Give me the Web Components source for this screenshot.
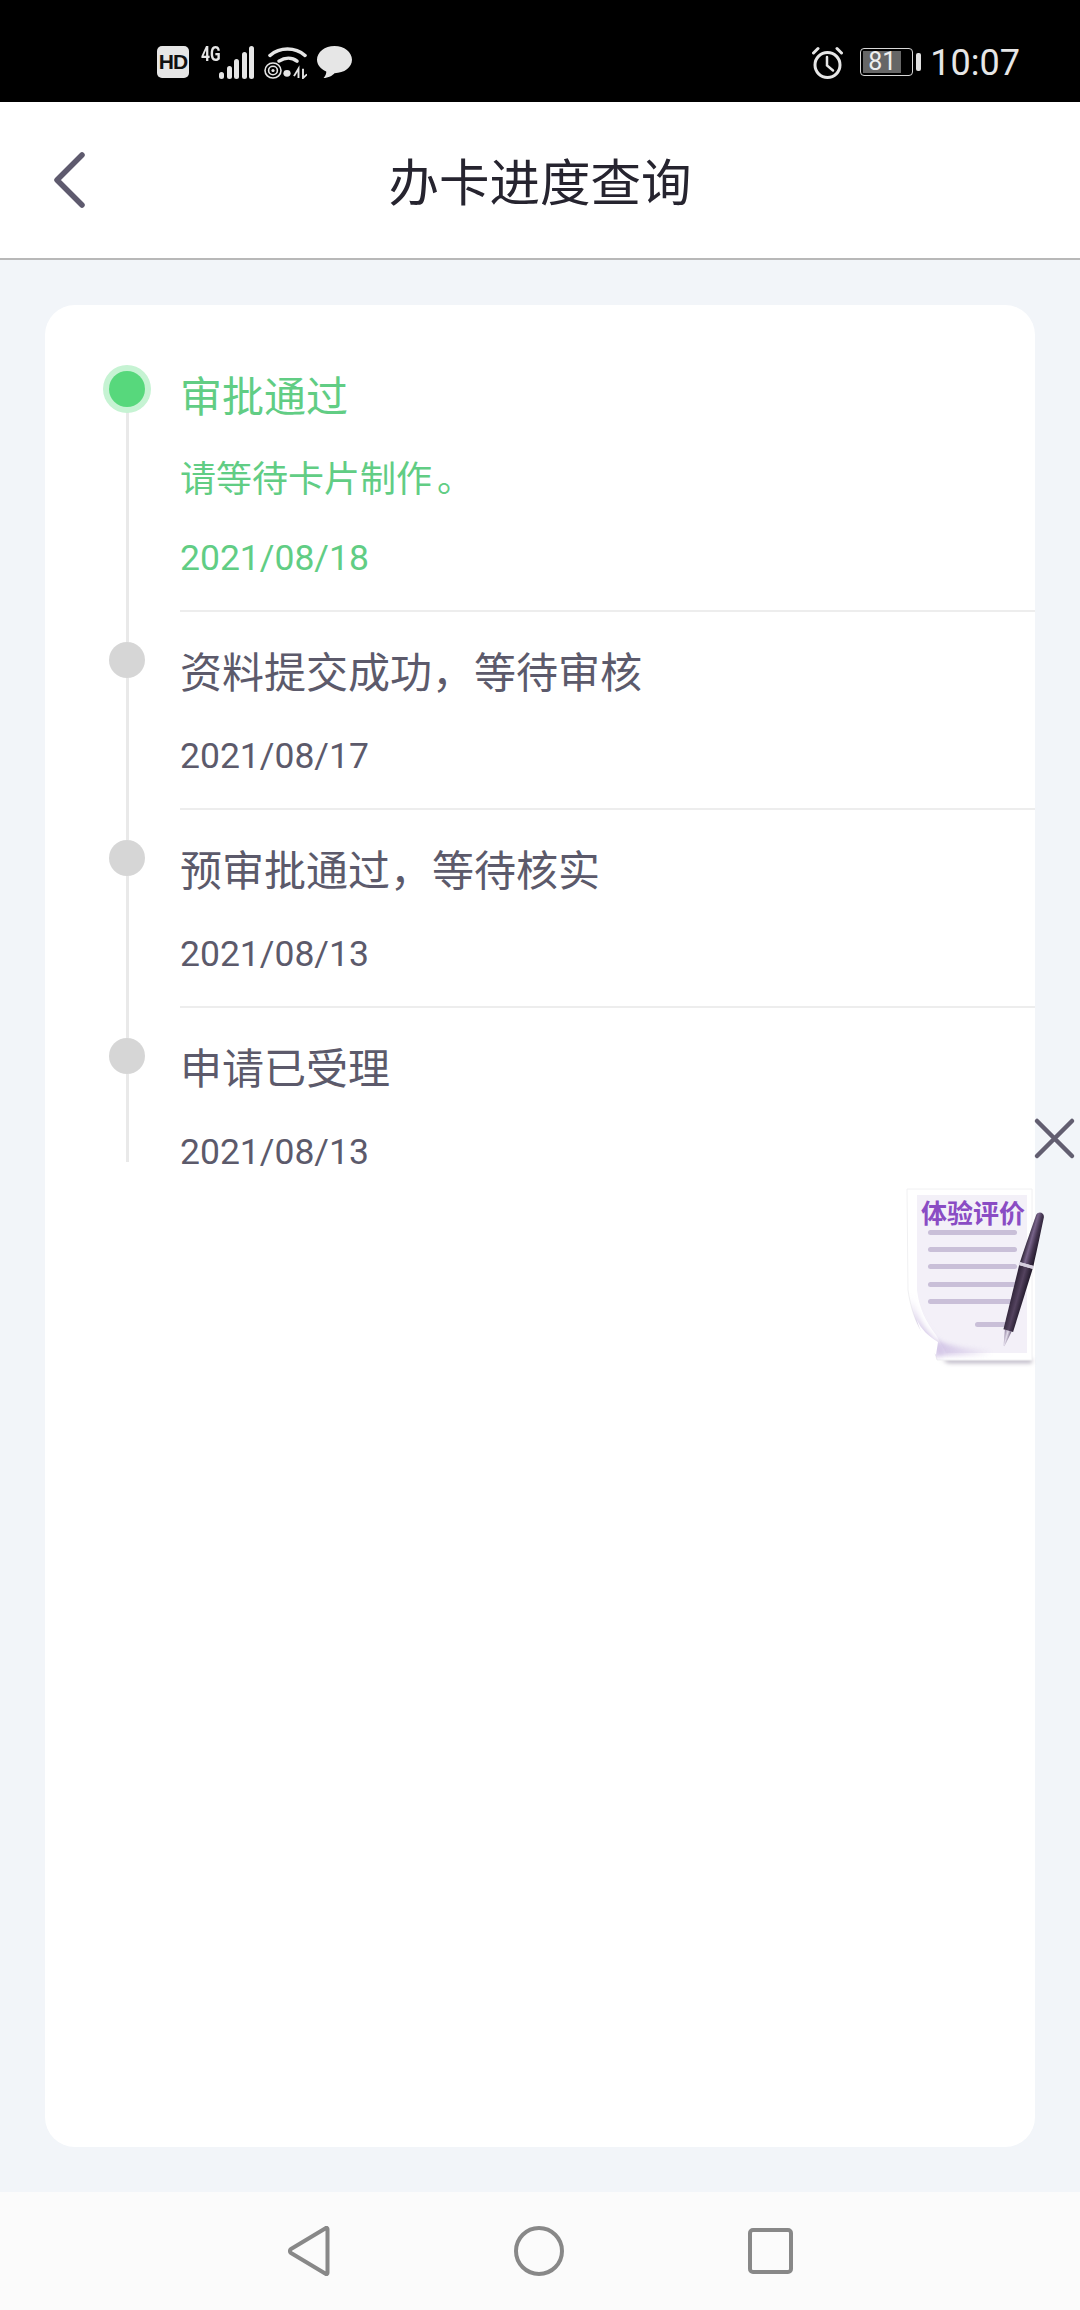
<!DOCTYPE html>
<html lang="zh">
<head>
<meta charset="utf-8">
<title>办卡进度查询</title>
<style>
  html, body { margin: 0; padding: 0; }
  body { font-family: Roboto, "Noto Sans CJK SC", sans-serif; }
</style>
</head>
<body>
<app-shell>
  <status-bar slot="top"></status-bar>
  <page-header slot="top">办卡进度查询</page-header>

  <progress-card>
    <progress-step status="active">
      审批通过
      <span slot="note">请等待卡片制作<span style="margin-left:5px">。</span></span>
      <span slot="date">2021/08/18</span>
    </progress-step>
    <progress-step>
      资料提交成功，等待审核
      <span slot="date">2021/08/17</span>
    </progress-step>
    <progress-step>
      预审批通过，等待核实
      <span slot="date">2021/08/13</span>
    </progress-step>
    <progress-step last>
      申请已受理
      <span slot="date">2021/08/13</span>
    </progress-step>
  </progress-card>

  <review-widget slot="float"></review-widget>
  <nav-bar slot="bottom"></nav-bar>
</app-shell>

<script>
const CJK = '"Noto Sans CJK SC", sans-serif';

class AppShell extends HTMLElement {
  constructor() {
    super();
    this.attachShadow({ mode: 'open' }).innerHTML = `
      <style>
        :host {
          display: flex;
          flex-direction: column;
          position: relative;
          width: 1080px;
          height: 2310px;
          overflow: hidden;
          background: #f2f5f9;
        }
        main {
          flex: 1;
          display: flex;
          min-height: 0;
          padding: 45px 45px 45px;
        }
      </style>
      <slot name="top"></slot>
      <main><slot></slot></main>
      <slot name="float"></slot>
      <slot name="bottom"></slot>
    `;
  }
}
customElements.define('app-shell', AppShell);

class StatusBar extends HTMLElement {
  constructor() {
    super();
    this.attachShadow({ mode: 'open' }).innerHTML = `
      <style>
        :host {
          display: flex;
          justify-content: space-between;
          align-items: center;
          box-sizing: border-box;
          height: 102px;
          padding: 22px 60px 0 157px;
          background: #000;
          color: #e6e6e6;
          font-family: Roboto, sans-serif;
        }
        .group { display: flex; align-items: center; }
        .left { gap: 10px; }
        .hd {
          width: 32px;
          height: 32px;
          margin-right: 2px;
          border-radius: 5px;
          background: #e6e6e6;
          color: #111;
          font: 700 21px/32px "Liberation Sans", sans-serif;
          letter-spacing: -1px;
          text-align: center;
        }
        .net { position: relative; display: flex; width: 53px; height: 33px; }
        .net span {
          position: absolute;
          left: 0;
          top: -2px;
          font: 700 20px/20px Roboto, sans-serif;
          transform: scaleX(.78);
          transform-origin: left top;
        }
        svg { display: block; }
        .right { gap: 17px; }
        .battery { display: flex; align-items: center; gap: 3px; }
        .cell {
          box-sizing: border-box;
          width: 53px;
          height: 28px;
          padding: 2px;
          border: 1.5px solid #d8d8d8;
          border-radius: 4px;
        }
        .fill {
          width: 81%;
          height: 100%;
          background: #666;
          color: #eee;
          font: 400 25px/21px Roboto, sans-serif;
          text-align: center;
        }
        .nub { width: 5px; height: 18px; border-radius: 2px; background: #e0e0e0; }
        .time { margin: 2px 0 0 -8px; font-size: 36px; font-weight: 400; line-height: 40px; }
      </style>
      <div class="group left">
        <div class="hd">HD</div>
        <div class="net">
          <span>4G</span>
          <svg width="53" height="33" viewBox="0 0 53 33" fill="#e6e6e6">
            <rect x="18" y="26" width="5" height="7" rx="2.500"/>
            <rect x="26" y="20" width="5" height="13" rx="2.500"/>
            <rect x="33" y="13" width="5" height="20" rx="2.500"/>
            <rect x="41" y="6" width="5" height="27" rx="2.500"/>
            <rect x="48" y="0" width="5" height="33" rx="2.500"/>
          </svg>
        </div>
        <svg width="43" height="33" viewBox="0 0 43 35" preserveAspectRatio="none" fill="none" stroke="#e6e6e6" stroke-linecap="round">
          <path d="M6 10C16 1 31 1 41 10" stroke-width="3.600"/>
          <path d="M15 16C21 12 28 12 33 16" stroke-width="3.600"/>
          <circle cx="9" cy="26" r="8" stroke-width="1.600"/>
          <circle cx="9" cy="26" r="4.400" stroke-width="1.600"/>
          <circle cx="9" cy="26" r="1.600" fill="#e6e6e6" stroke="none"/>
          <circle cx="23" cy="29" r="3.600" fill="#e6e6e6" stroke="none"/>
          <path d="M30 32L34.500 24V34M39 24V34L43 30" stroke-width="1.900" stroke-linecap="butt"/>
        </svg>
        <svg width="35" height="32" viewBox="0 0 35 33" preserveAspectRatio="none" fill="#e6e6e6">
          <path d="M17.500 0C27.200 0 35 6.300 35 14.200C35 22 27.200 28 17.500 28C16 30 11 33 6.600 33C8.600 31 9.600 27.600 9.200 26.300C3.600 23.800 0 19.400 0 14.200C0 6.300 7.800 0 17.500 0Z"/>
        </svg>
      </div>
      <div class="group right">
        <svg width="31" height="33" viewBox="0 0 31 33" fill="none" stroke="#e6e6e6" stroke-width="3" stroke-linecap="round">
          <circle cx="15.500" cy="19" r="12.500"/>
          <path d="M15 11V19.500L21 24.500" stroke-width="2.500"/>
          <path d="M1.500 7L6 2.500M29.500 7L25 2.500"/>
        </svg>
        <div class="battery">
          <div class="cell"><div class="fill">81</div></div>
          <div class="nub"></div>
        </div>
        <div class="time">10:07</div>
      </div>
    `;
  }
}
customElements.define('status-bar', StatusBar);

class PageHeader extends HTMLElement {
  constructor() {
    super();
    this.attachShadow({ mode: 'open' }).innerHTML = `
      <style>
        :host {
          display: grid;
          grid-template-columns: 1fr auto 1fr;
          align-items: center;
          box-sizing: border-box;
          height: 158px;
          padding-bottom: 2px;
          background: #fff;
          border-bottom: 2px solid #b8b8b8;
        }
        svg { display: block; margin-left: 52px; }
        h1 {
          margin: 0;
          color: #26242f;
          font: 400 50.500px/60px ${CJK};
        }
      </style>
      <svg width="34" height="60" viewBox="0 0 34 60" fill="none" stroke="#5e5a6e" stroke-width="5.500" stroke-linecap="round" stroke-linejoin="round">
        <path d="M30 6L5 31L30 56"/>
      </svg>
      <h1><slot></slot></h1>
      <div></div>
    `;
  }
}
customElements.define('page-header', PageHeader);

class ProgressCard extends HTMLElement {
  constructor() {
    super();
    this.attachShadow({ mode: 'open' }).innerHTML = `
      <style>
        :host {
          display: block;
          flex: 1;
          box-sizing: border-box;
          padding: 28px 0 0 64px;
          border-radius: 30px;
          background: #fff;
        }
      </style>
      <slot></slot>
    `;
  }
}
customElements.define('progress-card', ProgressCard);

const stepTemplate = document.createElement('template');
stepTemplate.innerHTML = `
  <style>
    :host {
      display: flex;
      gap: 35px;
      color: #5c5a6b;
    }
    :host([status="active"]) { color: #61cd84; }
    .rail {
      flex: none;
      display: flex;
      flex-direction: column;
      align-items: center;
      width: 36px;
    }
    .line { flex: 1; width: 3px; background: #e9e9e9; }
    .line.top { flex: none; height: 30px; }
    :host([status="active"]) .line.top { height: 38px; background: transparent; }
    :host([last]) .rail { padding-bottom: 44px; }
    .dot {
      flex: none;
      position: relative;
      width: 36px;
      height: 36px;
      border-radius: 50%;
      background: #d6d6d6;
    }
    :host([status="active"]) .dot {
      background: #57d87c;
      box-shadow: 0 0 0 6px #c6f3d3;
    }
    .body {
      flex: 1;
      box-sizing: border-box;
      height: 198px;
      padding-top: 28px;
      border-bottom: 2px solid #ededed;
    }
    :host([status="active"]) .body { height: 279px; padding-top: 31px; }
    :host([last]) .body { border-bottom: 0; }
    .title {
      font: 400 42px/60px ${CJK};
    }
    .note {
      display: none;
      margin-top: 27px;
      font: 400 36px/50px ${CJK};
    }
    :host([status="active"]) .note { display: block; }
    .date {
      margin-top: 31px;
      font: 400 35.500px/50px Roboto, sans-serif;
    }
    :host([status="active"]) .date { margin-top: 32px; }
  </style>
  <div class="rail">
    <div class="line top"></div>
    <div class="dot"></div>
    <div class="line"></div>
  </div>
  <div class="body">
    <div class="title"><slot></slot></div>
    <div class="note"><slot name="note"></slot></div>
    <div class="date"><slot name="date"></slot></div>
  </div>
`;

class ProgressStep extends HTMLElement {
  constructor() {
    super();
    this.attachShadow({ mode: 'open' });
    this.shadowRoot.appendChild(stepTemplate.content.cloneNode(true));
  }
}
customElements.define('progress-step', ProgressStep);

class ReviewWidget extends HTMLElement {
  constructor() {
    super();
    this.attachShadow({ mode: 'open' }).innerHTML = `
      <style>
        :host {
          display: block;
          position: absolute;
          left: 900px;
          top: 1110px;
          width: 180px;
          height: 260px;
        }
        svg { position: absolute; left: 0; top: 0; }
        span {
          position: absolute;
          left: 21px;
          top: 85px;
          color: #8a4cc4;
          font: 700 26px/34px ${CJK};
          white-space: nowrap;
        }
      </style>
      <svg width="180" height="260" viewBox="0 0 180 260">
        <defs>
          <linearGradient id="barrel" x1="0" y1="0" x2="1" y2="0">
            <stop offset="0" stop-color="#2a2032"/>
            <stop offset=".35" stop-color="#78648a"/>
            <stop offset=".65" stop-color="#43344f"/>
            <stop offset="1" stop-color="#1f1728"/>
          </linearGradient>
          <linearGradient id="lower" x1="0" y1="0" x2="1" y2="0">
            <stop offset="0" stop-color="#2d2236"/>
            <stop offset=".5" stop-color="#54435f"/>
            <stop offset="1" stop-color="#1f1728"/>
          </linearGradient>
          <linearGradient id="nib" x1="0" y1="0" x2="1" y2="0">
            <stop offset="0" stop-color="#8d7f9d"/>
            <stop offset=".5" stop-color="#e2dcea"/>
            <stop offset="1" stop-color="#6d5f7d"/>
          </linearGradient>
          <linearGradient id="fade" x1="0" y1="0" x2="1" y2="0">
            <stop offset="0" stop-color="#c2b0dd"/>
            <stop offset="1" stop-color="#c2b0dd" stop-opacity="0"/>
          </linearGradient>
          <filter id="soft" x="-30%" y="-200%" width="160%" height="500%">
            <feGaussianBlur stdDeviation="2"/>
          </filter>
          <filter id="shade" x="-40%" y="-40%" width="180%" height="180%">
            <feGaussianBlur stdDeviation="3.500"/>
          </filter>
          <clipPath id="sheet">
            <path d="M7 79H132V250H37L32 233C22 226 12 208 8 180Z"/>
          </clipPath>
        </defs>
        <path d="M42 249H132V253H48Z" fill="#b4aebd" filter="url(#soft)"/>
        <path d="M7 79H132V250H37L32 233C22 226 12 208 8 180Z" fill="#fff" stroke="#f0f0f2" stroke-width="1"/>
        <path d="M17 85H127V243H46L36 225C26 212 19 198 17 180Z" fill="#f3f0f8"/>
        <g clip-path="url(#sheet)">
          <path d="M9 188C14 206 24 222 34 230L40 246L34 246C22 232 12 212 9 188Z" fill="#c2b0dd" filter="url(#shade)"/>
          <path d="M36 230C50 236 66 239 92 240V246H38Z" fill="url(#fade)" filter="url(#soft)" opacity=".7"/>
        </g>
        <path d="M17 210C21 219 28 226 38 232L36 245C28 236 21 225 17 210Z" fill="#fff"/>
        <g fill="#c9bfd8">
          <rect x="28" y="120" width="89" height="5" rx="2.500"/>
          <rect x="28" y="137" width="89" height="5" rx="2.500"/>
          <rect x="28" y="154" width="89" height="5" rx="2.500"/>
          <rect x="28" y="172" width="89" height="5" rx="2.500"/>
          <rect x="28" y="189" width="84" height="5" rx="2.500"/>
          <rect x="75" y="212" width="32" height="5" rx="2.500"/>
        </g>
        <g transform="translate(104 236) rotate(15.500)">
          <path d="M-3.500 -16H3.500L0.500 0H-0.500Z" fill="url(#nib)"/>
          <path d="M-5 -16L-7 -82H7L5 -16Z" fill="url(#lower)"/>
          <path d="M-7 -85C-6 -105 -5 -120 -4 -135C-3 -139.500 3 -139.500 4 -135C5 -120 6 -105 7 -85Z" fill="url(#barrel)"/>
          <rect x="-7.500" y="-85" width="15" height="3" fill="#d5cede"/>
        </g>
        <path d="M137 11L172 46M172 11L137 46" stroke="#625e70" stroke-width="4.500" stroke-linecap="round" fill="none"/>
      </svg>
      <span>体验评价</span>
    `;
  }
}
customElements.define('review-widget', ReviewWidget);

class NavBar extends HTMLElement {
  constructor() {
    super();
    this.attachShadow({ mode: 'open' }).innerHTML = `
      <style>
        :host {
          display: flex;
          justify-content: center;
          align-items: center;
          gap: 184px;
          height: 118px;
          background: #fbfbfb;
        }
        svg { display: block; fill: none; stroke: #888; stroke-width: 4; stroke-linejoin: round; }
      </style>
      <svg width="42" height="50" viewBox="0 0 42 50">
        <path d="M39.500 3V47C39.500 48 38.500 48.500 38 48L3 27C1.500 26 1.500 24 3 23L38 2C38.500 1.500 39.500 2 39.500 3Z"/>
      </svg>
      <svg width="50" height="50" viewBox="0 0 50 50"><circle cx="25" cy="25" r="23"/></svg>
      <svg width="45" height="46" viewBox="0 0 45 46"><rect x="2" y="2" width="41" height="42" rx="3"/></svg>
    `;
  }
}
customElements.define('nav-bar', NavBar);
</script>
</body>
</html>
